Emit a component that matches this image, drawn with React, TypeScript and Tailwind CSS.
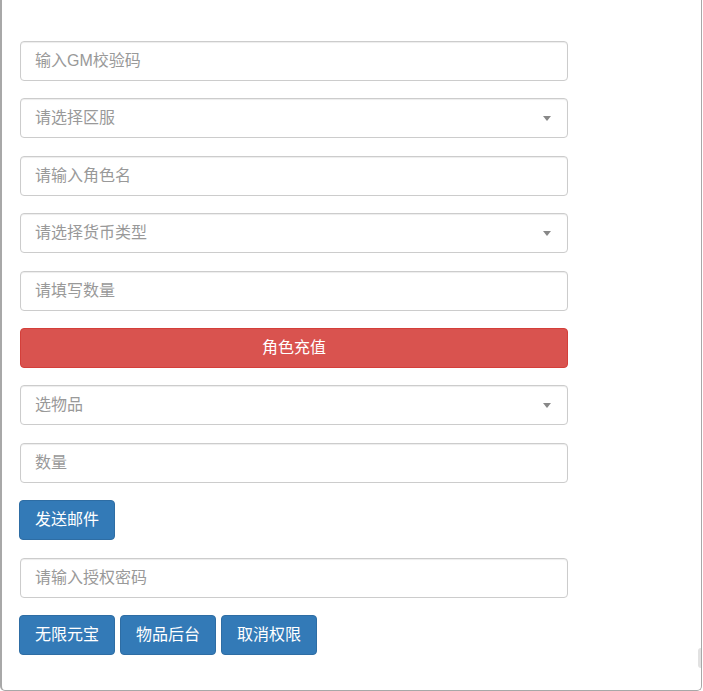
import React from 'react'

const font = { fontFamily: '"Liberation Sans", "Noto Sans CJK SC", sans-serif' }

function TextField({ placeholder }: { placeholder: string }) {
  return (
    <input
      type="text"
      placeholder={placeholder}
      className="block h-[40px] w-full rounded-[4px] border border-[#cccccc] bg-white px-[14px] text-[16px] text-[#555] placeholder:text-[#999] shadow-[inset_0_1px_1px_rgba(0,0,0,0.075)] outline-none"
    />
  )
}

function SelectField({ placeholder }: { placeholder: string }) {
  return (
    <div className="relative flex h-[40px] w-full items-center rounded-[4px] border border-[#cccccc] bg-white px-[14px] shadow-[inset_0_1px_1px_rgba(0,0,0,0.075)]">
      <span className="text-[16px] text-[#999]">{placeholder}</span>
      <span className="absolute right-[16px] top-1/2 -mt-[2px] h-0 w-0 border-x-[4px] border-t-[5px] border-x-transparent border-t-[#888]" />
    </div>
  )
}

function BlueButton({ label }: { label: string }) {
  return (
    <button className="h-[40px] w-[96px] rounded-[4px] border border-[#2e6da4] bg-[#337ab7] text-[16px] text-white">
      {label}
    </button>
  )
}

export default function App() {
  return (
    <div className="h-[691px] w-[703px] bg-white" style={font}>
      <div className="relative flex h-[691px] w-[702px] flex-col rounded-b-[5px] border-x border-b border-l-2 border-[#a8a8a8] pl-[18px] pt-[41px]">
        {/* scroll handle peeking at the right edge */}
        <span className="absolute right-0 top-[648px] h-[20px] w-[3px] rounded-l-full bg-[#e2e2e2]" />
        <div className="flex w-[548px] flex-col gap-[17.4px]">
          <TextField placeholder="输入GM校验码" />
          <SelectField placeholder="请选择区服" />
          <TextField placeholder="请输入角色名" />
          <SelectField placeholder="请选择货币类型" />
          <TextField placeholder="请填写数量" />
          <button className="h-[40px] w-full rounded-[4px] border border-[#d43f3a] bg-[#d9534f] text-[16px] text-white">
            角色充值
          </button>
          <SelectField placeholder="选物品" />
          <TextField placeholder="数量" />
          <div className="-ml-px">
            <BlueButton label="发送邮件" />
          </div>
          <TextField placeholder="请输入授权密码" />
          <div className="-ml-px flex gap-[5px]">
            <BlueButton label="无限元宝" />
            <BlueButton label="物品后台" />
            <BlueButton label="取消权限" />
          </div>
        </div>
      </div>
    </div>
  )
}
